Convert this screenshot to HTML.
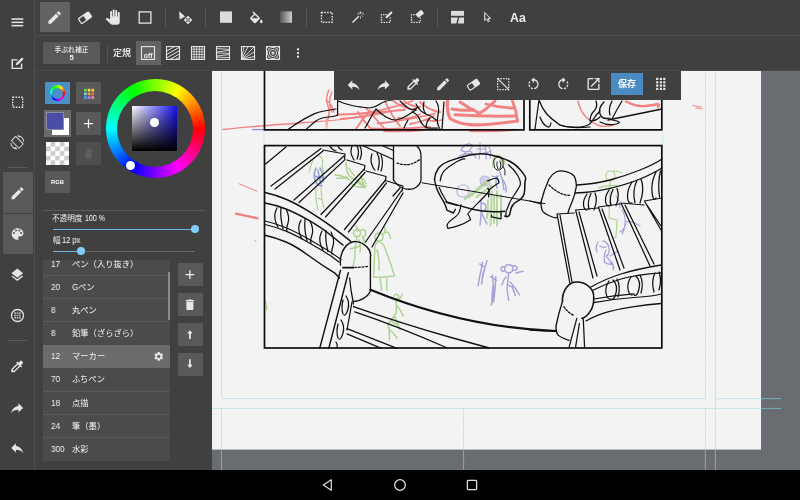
<!DOCTYPE html>
<html lang="ja"><head><meta charset="utf-8"><title>MediBang Paint</title>
<style>
*{margin:0;padding:0;box-sizing:border-box}
html,body{width:800px;height:500px;overflow:hidden;background:#404040;font-family:"Liberation Sans","Noto Sans CJK JP",sans-serif;color:#fff}
.abs{position:absolute}
#side{left:0;top:0;width:34px;height:470px;background:#404040}
#sideline{left:34px;top:0;width:1px;height:470px;background:#4e4e4e}
#top1{left:35px;top:0;width:765px;height:35px;background:#404040}
#top1line{left:35px;top:35px;width:765px;height:1px;background:#4e4e4e}
#top2{left:35px;top:36px;width:765px;height:34px;background:#404040}
#top2line{left:35px;top:70px;width:765px;height:1px;background:#4a4a4a}
#panel{left:35px;top:71px;width:177px;height:399px;background:#404040}
#canvas{left:212px;top:71px;width:588px;height:399px;background:#696d72;overflow:hidden}
#nav{left:0;top:470px;width:800px;height:30px;background:#000}
.sel{background:#636363}
.btn{background:#595959}
svg{position:absolute;left:0;top:0;overflow:visible}
.ln{left:0;width:127px;height:1px;background:#5a5a5a}
.t{position:absolute;white-space:nowrap;line-height:1;will-change:transform}
.n{font-size:9.400px;transform:scaleX(.87);transform-origin:0 50%}
</style></head><body>
<div id="canvas" class="abs">
<svg width="588" height="399" viewBox="212 71 588 399">
<defs>
<pattern id="chk" x="212" y="71" width="3.200" height="3.200" patternUnits="userSpaceOnUse"><rect width="3.200" height="3.200" fill="#fdfdfd"/><rect width="1.600" height="1.600" fill="#e9e9e9"/><rect x="1.600" y="1.600" width="1.600" height="1.600" fill="#e9e9e9"/></pattern>
</defs>
<rect x="212" y="71" width="549" height="378.600" fill="url(#chk)"/>
<!-- guides -->
<g stroke="#6fd0d8" stroke-width="0.900" fill="none" opacity="0.420">
<path d="M221.500 71V398.600M221.500 408.400V449.600M463.600 408.400V449.600M705.400 71V398.600M705.400 408.400V449.600M715.400 71V449.600"/>
<path d="M221.500 398.600H705.400M715.400 398.600H761M212 408.400H761"/>
<path d="M264 71V348M662.700 71V348" opacity="0.700"/>
</g>
<g stroke="#74cfd6" stroke-width="0.900" fill="none" opacity="0.800">
<path d="M221.500 449.600V470M463.600 449.600V470M705.400 449.600V470M715.400 449.600V470M761 398.600H781M761 408.400H781"/>
</g>
<!--ARTB--><!-- red rough sketch -->
<g fill="none" stroke="#f26d6d" stroke-linecap="round" stroke-linejoin="round" opacity="0.850">
<path d="M223 129.500Q250 126.500 300 123T356 117" stroke-width="1.300"/>
<path d="M239.200 183.800L256.800 191.200" stroke-width="1"/>
<path d="M236 213.600L257.400 218.400" stroke-width="2.400"/>
<path d="M254.500 240l1.500 1.500" stroke-width="1"/>
<path d="M329 90q-4 8-1 16t-2 18M332 92q-5 10 0 20M326 100q6 4 8 12" stroke-width="1.400"/>
<path d="M337.500 114.750q30-1 67.500-5M341 119q24-2 50-8" stroke-width="2"/>
<path d="M362.500 113.500q26-4 50-12.500M377.500 123.500q30-3 57.500-10M366 108l18 20M358 112q6 10 14 18M370 111q-8 8-14 18" stroke-width="1.800"/>
<path d="M385 101q6 14 15 25M392 100q10 8 24 10M404 101q8 6 16 6M398 118q12 2 22-4M410 124q12-2 24-8M420 102q8 8 20 10M426 120q8 2 16 0" stroke-width="1.800"/>
<path d="M372.500 128.500q28 1 57.500-1.500M384 131q20 1 40-1" stroke-width="1.800"/>
<path d="M447.500 101q-1 10 2.500 17.500q8 5 20 6.200t47.500-3.700" stroke-width="3.200"/>
<path d="M455 114.750q30 2 60 1.250M452 109q10 2 22 1" stroke-width="3"/>
<path d="M460 102q10 7 20 11.500M495 101q-8 8-17.500 13.750M512.500 101q4 10 5 20M486 104q14 4 28 4" stroke-width="2.800"/>
<path d="M470 131q22 1 45-1.200" stroke-width="2"/>
<path d="M578 101q2 10 8 16t14 9q8 1 14-1" stroke-width="1.400"/>
<path d="M626 101.500q8 4 14 4.500t18-2q2 1 0 3" stroke-width="2.400"/>
<path d="M693 105.500l8 1.500M696 108l6 .8" stroke-width="1"/>
</g>
<path d="M252 129.600h12.500" stroke="#8c8ce0" stroke-width="1.300" fill="none"/>
<path d="M326 118q2 6 0 12" stroke="#f6b08a" stroke-width="2" fill="none" opacity="0.800"/>
<!-- purple figures -->
<g fill="none" stroke="#a29dd8" stroke-width="1.100" stroke-linecap="round" stroke-linejoin="round" opacity="0.950">
<path d="M461 150q4-7 9-6t-1 7q-5 2-8-1M459 156q9-4 17-1M470 151q4 3 6 7M466 152l-4 6M480 143q1 8-1 16M477 149h8M485 146q2 7 1 13M489 147q3 5 1 11M483 153q5 0 8-2" stroke-width="1.200"/>
<path d="M480 181q0-5 5-5t5 5t-5 5t-5-5z" fill="#a9a4da" fill-opacity="0.450" stroke-opacity="0.600"/><path d="M457 191q0-6 6-6t6 6t-6 6t-6-6z" opacity="0.600" stroke-width="1.600"/><path d="M500 172q3 8 4 18M497 176q-2 6 0 12M503 180q4 6 3 12M492 176q4 2 6 0" stroke="#8f9bd4" stroke-width="1.300"/>
<path d="M481 201q1 12-1 24M481 203q5 0 5 4t-5 5l6 12" stroke-width="1.500"/>
<path d="M482.600 262.200q-1 6-2.200 11t-2.400 12.600M487 260.400q-1.500 6-3 11t-2.400 12.600M479.800 264q2 2 4.300 2.600M484 270q-2 6-2 12" stroke-width="1.500"/>
<path d="M492.400 275q.8 6 1.100 12.600t-2.200 17.400M495.700 276.700q0 6-.7 12.700t-1.500 12.700M490.600 276.700q3 2 5.800 3.700M493 286q-1 8-1 14" stroke-width="1.500"/>
<path d="M504.700 268.800q0-4 4-4t4 4t-4 4t-4-4zM504 267q-3-1-3 2t3 2M513 266q3-1 4 1.500t-3 3M508.700 273q-1 8-1.700 16.400l1.700 11M510 282q4 4 9.600 13M512.400 287.600l3 8M516 273q4-1 7-1.700M506 277q-3 3-4 8M507 284q3 3 6 3" stroke-width="1.400"/>
<path d="M598 242q-3 5-1 10M603 241q5 1 6 7t-3 8q4 4 8 12M606 250q-3 6-1 12M610 256l8-5M604 262q4 3 8 2M612 262q2 4 1 8M600 246q3 2 6 1" stroke-width="1.300"/>
<path d="M622 210q4 6 3 14t-3 10M625 222q6-2 15 4M620 232q4-2 6-8M616 196q4 6 4 12"/>
<path d="M316 168q-3 6-1 12t7 6M320 168q4 6 3 14M315 176q5 3 9 1M318 170q1 8 3 14" stroke="#8f9bd4" stroke-width="1.600"/>
</g>
<!-- green figures -->
<g fill="none" stroke="#a5cf86" stroke-width="1.100" stroke-linecap="round" stroke-linejoin="round" opacity="0.900">
<path d="M315 158q3-4 6-1t1 9M314 158q-3 6-5 14M322 166q2 4 1 8M316 188q-1 10 2 22M321 188q0 10 3 20M318 198l4 2"/>
<path d="M335 175q5 0 9 1.750t6 3.750M337 178q6 1 10-1M346 162.500q0 6 1.750 10.500t6.750 6t10.500 9M349 168q3 6 6 8M360.500 176q2 5 3 9M357 182q4 4 9 4M352 184q5 4 12 3M362 178q3 2 4 6" stroke-width="1.500"/>
<path d="M353.500 233q0-3.500 3.500-3.500t3.500 3.500t-3.500 3.500t-3.500-3.500zM360 231q3-3 5 0t-1 6M357 237q-2 8-2 15t-2 15M350.400 248.800q5-1 9.100-2.800M359 240q2 6 1 12M362 236q3 4 2 9M356 226q2 3 1 5" stroke-width="1.400"/>
<path d="M375 237q0-4 4-4t4 4t-4 4t-4-4zM382 235q3-3 5-3t3.700 6.400M379 241q-3 2-4 5.200q-1 16-1.200 31.200q10 0 20.800-1.400q-5-16-10.400-29.800q-2-3-5.200-5.200M380.300 278.700l1.300 11.700M386.800 278.700v11.700M377 250q3 10 2 20M384 226q2 4 0 7" stroke-width="1.400"/>
<path d="M394 296q2-3 4-1t-1 4M402.400 294.300q-2 4-4 6M396 299q1 8 0 14.800q-4 5-8 10.400q2 8 1.400 15.600M397 306q4 4 6 10M394 316q4 6 6 14M390 330q4 3 7 8M392 322l6 3" stroke-width="1.500"/>
<path d="M493 159q3-5 7-3t5 8M495 158q-3 4-2 9M499 156.500q3 3 3 8" stroke-width="1.300"/>
<path d="M488 180.500q-11 9-23 18.500M491.500 185.600q-8 6-15 11.500M485 184q-8 7-16 13" stroke-width="2.400" opacity="0.850"/>
<path d="M491.500 191q0 17-1 34.500M497 191v34.500M494 196q.5 14 0 27M501 195v20M488 200q0 10-1 18" stroke-width="2" opacity="0.850"/>
<path d="M606 176q0-5 4.500-5t4.500 5t-4.500 5t-4.500-5zM610 181q0 18-1 37l8 2l-1 17l-4 1M598 188q10-4 22-2M613 171q6 0 9 2"/>
<path d="M264.500 300q3 4 2 10" />
</g>
<!-- black line art -->
<g fill="none" stroke="#111" stroke-width="1.250" stroke-linecap="round" stroke-linejoin="round">
<!-- panel 1 content -->
<path d="M288 129.600q8-6 16-10.500t12-6t20-4.100M306 129.600q5-5 10-8.600t12-4t9.600-2M337.600 115V100.500"/>
<path d="M338 101q7 3 14 4.500t18 2.500q6-1 10-4t12-4"/>
<path d="M376 109q-4 6-6 10t-5 9M376 109q5 5 10 8t10 3q6-1 12-5t8-5"/>
<path d="M404 128q2-5 4-8M400 101q6 6 10 8t8-2M416 104q4 8 10 10t10 6M424 102q-2 8 2 12M430 118q-4 4-4 10M436 101q4 6 2 14t2 14M444 102l-2 27"/>
<path d="M412 112q6 2 8 8t8 8h10"/>
<path d="M539 100q3 8 7 13t14 12q10 3 20 2t12-6q4-6 8-10M539 100q-2 14-4 29M540 117q2 6 6 9t5-3"/>
<path d="M596 101q2 6-2 10t-4 10q6 0 10-4M604 102q-6 6-4 12t10 4M612 101q-4 8-2 14M600 122q8 4 16 2t-4-4M622 101q-6 10-10 18"/>
<path d="M608 120L662 109" stroke-width="1.300"/>
<path d="M560 125q10 4 30 2" />
<!-- panel 2: upper-left stairs -->
<path d="M265.600 164L286 147"/>
<path d="M271 186L321 148.400M275 189L323 151"/>
<path d="M323 150L345 154L344.500 159"/>
<path d="M294 200L344 156M299 202.500L345 159.600"/>
<path d="M347 160L365 165.500L364.300 170"/>
<path d="M321 214.500L364 169.500M325.500 217L365 172.500"/>
<path d="M366 171L386 176.500L385.500 181"/>
<path d="M344.500 229.500L385.600 180M348.500 232L386.400 183"/>
<path d="M387 181L403 186L402 191"/>
<path d="M365.500 242L402 190M372 247L403 193"/>
<!-- far baluster rail -->
<path d="M363.500 146L393.500 159.500M383 146L393.500 150.500"/>
<path d="M330 146q2 4 6 5M338 146q1 3 4 4"/>
<path d="M352 146q-2 6 0 10t2 4M357 146q3 6 0 13M360 146q3 7 0 13.500"/>
<path d="M372 154q-2 6 0 11t3 5M377 153q4 7 1 17M381 155q3 7 0 16"/>
<path d="M393.500 160V180.500"/>
<!-- far post -->
<path d="M393.500 146V180q4 6 9 8t10.500.800q6-2 8-8.300V155q-.5-6-4-8.500"/>
<path d="M397 163.200q5 1.500 10 1.500t12.700-5" stroke-dasharray="2 1.600"/>
<path d="M400 188L393 196"/>
<!-- long line behind tub -->
<path d="M422 182.800L545 203.600" stroke-width="1"/>
<!-- tub -->
<path d="M434.500 179q.5-6 3.800-10.500t11.400-7.600t19-5.700t19-.9t17 4.800t15.300 10.400t5.600 9.500t-.9 10.500t-6.700 11.400t-7.600 10.400t-5.700 4.700" stroke-width="1.500"/>
<path d="M440.200 180.800q.5-5 2.800-8.500t10.500-8.600t11.400-4.700M508.500 164.700q6 5 9.500 11.300t2 9.600t-5.800 9.400t-5.700 10.500l-1.900 4.700"/>
<path d="M434.500 179q.5 4 1.900 8.500t5.600 11.400t4.800 11.300l6.700 2.800l1.900-3.700" stroke-width="1.400"/>
<path d="M439.200 187.500q2 5 4.800 9.500t2.800 5.700l10.500 2.800"/>
<path d="M445.900 201.700q13 4 26.600 7.600t32.200 1.900" stroke-width="1.400"/>
<path d="M501 211.200v7.600l-9.500-1.900v-1.900M506 211v5"/>
<path d="M461 204.600q-.5 4-1.800 7.500t-7.600 7.600t-3.800 8.600q6-1 11.400-2.900t11.400-5.700q-1-3-2.900-5.700q4-5 8.600-9.400t9.500-9.600t1.900-6.600" stroke-width="1.200"/>
<path d="M487.700 180.800q5-2 9.300-2.800q2 2 2 4.700q-5 3-9.500 6.700q-1 4-.9 7.600"/>
<!-- sitting figure head -->
<path d="M494 160q2-4 5-3.500t4 4.500t-1 7t-5 2t-3-5zM497 162q-1 4 1 7M500 161q2 4 0 8M503 166q3 4 2 9" stroke-width="0.900"/>
<!-- right post top -->
<path d="M530 201L541 204"/>
<path d="M541 202q3-12 8-23q3-5 7-7t10-.400t8 4.400t2.400 10q-1 8-4.400 16t-4 11" stroke-width="1.300"/>
<path d="M541 202q0 5 1 8t8 6t7 1"/>
<path d="M549 185q5 5 11 8t10 2" stroke-dasharray="2 1.600"/>
<!-- upper right railing -->
<path d="M577 185q18-1 33-5t30-10t22-11" stroke-width="1.300"/>
<path d="M575 193q18-.5 35-4.600t30-9.400t22-11" stroke-width="1.300"/>
<path d="M587 194q-4 6-3.500 11t3.500 5M591 193.500q-4 8-2 16M595 193q3 7-1 17"/>
<path d="M609 190q-4 6-3.500 11t3.500 5M613 189.500q-4 8-2 16M617 188.500q3 7-1 17"/>
<path d="M632 182q-5 8-4.500 15t4.500 6M637 180.500q-5 10-2 22M641 179q4 10-1 24"/>
<path d="M656 172q-5 10-4 20t4 6M660.500 171q-3 12-1 26"/>
<!-- upper right steps -->
<path d="M557 214L574 213M557 214L570 284M560 215L572 282"/>
<path d="M575.600 210L598 208M575.600 210L593 278M579 212L597 276"/>
<path d="M598.400 207L620 204M598.400 207L620 270M602 209L624 268"/>
<path d="M621 203L644 205M621 203L650 266M625 205L654 264"/>
<path d="M644.400 201L662 198M644.400 201L661 230M647 205L661 226"/>
<!-- lower right railing -->
<path d="M591 287q14-8 30-13t40.300-9" stroke-width="1.300"/>
<path d="M592.400 290.500q14-7 28.600-11.500t40.300-6.200" stroke-width="1.300"/>
<path d="M593.700 302.700q20-4 40.300-5.200t27.300-3.500M594 299q20-4 40-5.200"/>
<path d="M586 321q10-6 22-9.200t26-5.200t27.300-3.100" stroke-width="1.300"/>
<path d="M609 281q-4 6-3 12t4 6M613 280q5 5 3 13t-5 6M617 279q4 8 1 18"/>
<path d="M631 277q-4 6-3 12t4 6M636 276q5 5 3 13t-5 6M640 275q4 8 1 18"/>
<path d="M655 273q-4 8-1 19M659 272q3 8 0 18"/>
<!-- lower right post -->
<path d="M562.500 301.400q-.5-8 4-14t11.500-5.400t11.500 5t4.200 10.400q.5 8-3.500 14t-8.200 7" stroke-width="1.600"/>
<path d="M562.500 301.400q-4 12-6.500 24.600q-.5 5 1.300 8t11.700 6.400" stroke-width="1.400"/>
<path d="M563.800 306.600q4 6 10.400 9.100" stroke-dasharray="2 1.600"/>
<path d="M576.800 318.300L569 347.700M583.300 319L584.600 347.700M579.400 323.500L575.500 347.700"/>
<path d="M530 330L556 331.300" stroke-width="1.600"/>
<!-- big stair lines lower middle -->
<path d="M370.400 289.700C415 308 480 328 556 331" stroke-width="2.100"/>
<path d="M353.500 306.600Q400 323 452 337.800L488.400 347.700" stroke-width="1.500"/>
<path d="M354.800 311.800Q400 327 446.800 347.700"/>
<path d="M347 328.700L396.400 348.200M347 333.900L380.800 348.200"/>
<!-- left railing arcs -->
<path d="M265 192.500q11 2.500 21 6.700t22.500 12t22.500 15t19.500 15" stroke-width="1.500"/>
<path d="M265 203q11 2 21 6t22.500 11.200t19.500 12.800t15 12" stroke-width="1.500"/>
<path d="M265 221q11 2.500 21 6.700t22.500 11.300t22.500 13.500l10 7" stroke-width="1.100"/>
<path d="M265 224.500q11 2.500 21 6.700t22.500 11.300t22.500 13.500l8 6"/>
<path d="M265 235.250q11 2.500 21 6.750t22.500 13.500t26 17.300l5 5.200" stroke-width="1.500"/>
<!-- left balusters -->
<path d="M277 208q-3 6-2 11t3 8M281 207.500q-1 10 2 21M286 209q4 8 2 14t-1 8"/>
<path d="M301 220q-3 6-2 11t3 8M305 219.500q-1 10 2 21M310 221q4 8 2 14t-1 8"/>
<path d="M322 231q-3 6-2 11t3 8M326 230.500q-1 10 2 21M331 232q4 8 2 14t-1 8"/>
<!-- left post -->
<path d="M340.500 265q-1-10 4-17t11.500-6.400t11 5.400t3.400 10.200V291q-2 5-7.800 7.800t-9.100 2.600" stroke-width="1.400"/>
<path d="M343 267.600H353.500" stroke-width="1.800"/>
<path d="M355 267.400q6 0 12.800-1.100" stroke-dasharray="1.800 1.800"/>
<path d="M340.500 270.200L319.700 348.200M348.300 272.800L328.800 348.200" stroke-width="1.400"/>
<path d="M349.600 278q1 12 3.900 26"/>
<path d="M346 296q4 6 2 13t-4 6M343 300q-2 8 0 14M341 320q4 6 2 13t-4 6M338 324q-2 8 0 14M336 342q2 3 1 6"/>
<path d="M352 302L347 330"/>
</g>
<!-- panel borders -->
<g fill="none" stroke="#0c0c0c" stroke-width="1.700">
<path d="M264.500 70V129.800H524V70"/>
<path d="M529.800 70V129.800H661.800V70"/>
<rect x="264.500" y="145.600" width="397.300" height="202.400"/>
</g>
<!--ARTE-->
</svg>

</div>
<div id="side" class="abs"></div><div id="sideline" class="abs"></div>
<div id="top1" class="abs"></div><div id="top1line" class="abs"></div>
<div id="top2" class="abs"></div><div id="top2line" class="abs"></div>
<div id="panel" class="abs"></div>
<div id="nav" class="abs"></div>
<div class="abs sel" style="left:40px;top:2px;width:30px;height:30px"></div>
<div class="abs btn" style="left:3px;top:172px;width:30px;height:41px"></div>
<div class="abs btn" style="left:3px;top:214px;width:30px;height:40px"></div>
<div class="abs btn" style="left:43px;top:42px;width:57px;height:22px"></div>
<div class="t" style="left:43px;top:47.200px;width:57px;text-align:center;font-size:6.800px;font-weight:500;color:#f2f2f2">手ぶれ補正</div>
<div class="t" style="left:43px;top:54px;width:57px;text-align:center;font-size:7.600px;font-weight:bold;color:#f2f2f2">5</div>
<div class="t" style="left:113px;top:48.500px;font-size:9px;font-weight:500;color:#f4f4f4">定規</div>
<div class="abs sel" style="left:136px;top:41px;width:25px;height:24px"></div>
<!-- color buttons -->
<div class="abs" style="left:45px;top:82px;width:25px;height:22px;background:#4a90c4"></div>
<div class="abs" style="left:49.600px;top:85.300px;width:15.800px;height:15.800px;border-radius:50%;background:conic-gradient(from 90deg,#f00,#f0f,#00f,#0ff,#0f0,#ff0,#f00)"></div>
<div class="abs" style="left:51.800px;top:87.500px;width:11.400px;height:11.400px;border-radius:50%;background:#4a90c4"></div>
<div class="abs btn" style="left:76px;top:82px;width:25px;height:22px"></div>
<div class="abs" style="left:44px;top:110px;width:27px;height:27px;background:#6a6a6a"></div>
<div class="abs" style="left:52px;top:118px;width:17px;height:17px;background:#fff"></div>
<div class="abs" style="left:46px;top:112px;width:18px;height:17.500px;background:#4a4ca8;border:1px solid #8c8ca0"></div>
<div class="abs btn" style="left:76px;top:112px;width:25px;height:23px"></div>
<div class="abs" style="left:46px;top:142px;width:23px;height:22.500px;background-color:#fff;background-image:linear-gradient(45deg,#c8c8c8 25%,transparent 25%,transparent 75%,#c8c8c8 75%),linear-gradient(45deg,#c8c8c8 25%,transparent 25%,transparent 75%,#c8c8c8 75%);background-size:9.200px 9.200px;background-position:0 0,4.600px 4.600px"></div>
<div class="abs" style="left:76px;top:142px;width:25px;height:23px;background:#4e4e4e"></div>
<div class="abs btn" style="left:45px;top:171px;width:25px;height:22px"></div>
<div class="t" style="left:45px;top:179.800px;width:25px;text-align:center;font-size:5.800px;font-weight:bold;color:#fff">RGB</div>
<!-- color wheel -->
<div class="abs" style="left:105.500px;top:78.800px;width:99.400px;height:99.400px;border-radius:50%;background:conic-gradient(from 90deg,#f00,#f0f,#00f,#0ff,#0f0,#ff0,#f00)"></div>
<div class="abs" style="left:117.200px;top:90.500px;width:76px;height:76px;border-radius:50%;background:#404040"></div>
<div class="abs" style="left:132px;top:106px;width:45.300px;height:45px;background:linear-gradient(to top,#000,rgba(0,0,0,0)),linear-gradient(to right,#fff,#1410f0)"></div>
<div class="abs" style="left:149.900px;top:117.900px;width:9px;height:9px;border-radius:50%;background:#fff"></div>
<div class="abs" style="left:126.200px;top:160.500px;width:9px;height:9px;border-radius:50%;background:#fff"></div>
<!-- sliders -->
<div class="abs" style="left:43px;top:210px;width:162px;height:1px;background:#5a5a5a"></div>
<div class="t" style="left:52.400px;top:215px;font-size:7.600px;color:#f2f2f2">不透明度</div>
<div class="t n" style="left:85px;top:214.300px;font-size:8.600px;transform:scaleX(.82)">100 %</div>
<div class="abs" style="left:53px;top:228.700px;width:142px;height:1.200px;background:#6ab7ea"></div>
<div class="abs" style="left:190.800px;top:225.400px;width:7.800px;height:7.800px;border-radius:50%;background:#82cdf7"></div>
<div class="t" style="left:53px;top:237px;font-size:7.600px;color:#f2f2f2">幅</div>
<div class="t n" style="left:62px;top:236.300px;font-size:8.600px">12 px</div>
<div class="abs" style="left:53px;top:250.700px;width:142px;height:1.200px;background:#686868"></div>
<div class="abs" style="left:53px;top:250.700px;width:28px;height:1.200px;background:#6ab7ea"></div>
<div class="abs" style="left:77px;top:247.400px;width:7.800px;height:7.800px;border-radius:50%;background:#82cdf7"></div>
<!-- brush list -->
<div class="abs" id="blist" style="left:43px;top:259.500px;width:127px;height:201.500px;background:#4b4b4b;overflow:hidden;font-size:8.300px;color:#f4f4f4">
<div class="abs" style="left:0;top:85px;width:127px;height:23.500px;background:#6b6b6b"></div>
<div class="abs ln" style="top:15.500px"></div><div class="abs ln" style="top:38.500px"></div><div class="abs ln" style="top:61.500px"></div>
<div class="abs ln" style="top:131px"></div><div class="abs ln" style="top:154px"></div><div class="abs ln" style="top:177.500px"></div>
<div class="t n" style="left:7.500px;top:-0.1px">17</div><div class="t" style="left:28.500px;top:0.800px">ペン（入り抜き）</div>
<div class="t n" style="left:7.500px;top:22.3px">20</div><div class="t n" style="left:28.500px;top:22.300px">G</div><div class="t" style="left:34.500px;top:23.200px">ペン</div>
<div class="t n" style="left:7.500px;top:45.4px">8</div><div class="t" style="left:28.500px;top:46.300px">丸ペン</div>
<div class="t n" style="left:7.500px;top:68.6px">8</div><div class="t" style="left:28.500px;top:69.500px">鉛筆（ざらざら）</div>
<div class="t n" style="left:7.500px;top:91.7px">12</div><div class="t" style="left:28.500px;top:92.600px">マーカー</div>
<div class="t n" style="left:7.500px;top:114.7px">70</div><div class="t" style="left:28.500px;top:115.600px">ふちペン</div>
<div class="t n" style="left:7.500px;top:138.1px">18</div><div class="t" style="left:28.500px;top:139px">点描</div>
<div class="t n" style="left:7.500px;top:161.1px">24</div><div class="t" style="left:28.500px;top:162px">筆（墨）</div>
<div class="t n" style="left:7.500px;top:184.1px">300</div><div class="t" style="left:28.500px;top:185px">水彩</div>
<div class="abs" style="left:124.600px;top:12px;width:2.200px;height:48px;background:#8a8a8a"></div>
</div>
<div class="abs btn" style="left:178px;top:263px;width:24.500px;height:22.500px"></div>
<div class="abs btn" style="left:178px;top:293px;width:24.500px;height:22.500px"></div>
<div class="abs btn" style="left:178px;top:323px;width:24.500px;height:22.500px"></div>
<div class="abs btn" style="left:178px;top:353px;width:24.500px;height:22.500px"></div>
<!-- floating toolbar -->
<div class="abs" style="left:334px;top:71px;width:347px;height:28.500px;background:#404040"></div>
<div class="abs" style="left:611px;top:73px;width:32px;height:22px;background:#4a8cc2"></div>
<div class="t" style="left:611px;top:79.500px;width:32px;text-align:center;font-size:9px;font-weight:bold;color:#fff">保存</div>

<svg width="800" height="500" viewBox="0 0 800 500">
<defs>
<path id="i-pencil" d="M3 17.25V21h3.750L17.810 9.940l-3.750-3.750L3 17.250zM20.710 7.040c.390-.390.390-1.020 0-1.410l-2.340-2.340c-.390-.390-1.020-.390-1.410 0l-1.830 1.830 3.750 3.750 1.830-1.830z"/>
<path id="i-reply" d="M10 9V5l-7 7 7 7v-4.100c5 0 8.500 1.600 11 5.100-1-5-4-10-11-11z"/>
<path id="i-dropper" d="M20.710 5.630l-2.340-2.340c-.390-.390-1.020-.390-1.410 0l-3.120 3.120-1.930-1.910-1.410 1.410 1.420 1.420L3 16.250V21h4.750l8.920-8.920 1.420 1.420 1.410-1.410-1.920-1.920 3.120-3.120c.400-.400.400-1.030.010-1.420zM6.920 19L5 17.080l8.060-8.060 1.920 1.920L6.920 19z"/>
<path id="i-layers" d="M11.990 18.540l-7.370-5.730L3 14.070l9 7 9-7-1.630-1.270-7.380 5.740zM12 16l7.360-5.730L21 9l-9-7-9 7 1.630 1.270L12 16z"/>
<path id="i-palette" d="M12 3c-4.970 0-9 4.030-9 9s4.030 9 9 9c.830 0 1.500-.670 1.500-1.500 0-.390-.150-.740-.390-1.010-.230-.260-.380-.610-.380-.990 0-.830.670-1.500 1.500-1.500H16c2.760 0 5-2.240 5-5 0-4.420-4.030-8-9-8zm-5.500 9c-.830 0-1.500-.670-1.500-1.500S5.670 9 6.500 9 8 9.670 8 10.500 7.330 12 6.500 12zm3-4C8.670 8 8 7.330 8 6.500S8.670 5 9.500 5s1.500.67 1.500 1.500S10.330 8 9.500 8zm5 0c-.830 0-1.500-.670-1.500-1.500S13.670 5 14.500 5s1.500.67 1.500 1.500S15.330 8 14.500 8zm3 4c-.830 0-1.500-.670-1.500-1.500S16.670 9 17.500 9s1.500.67 1.500 1.500-.670 1.500-1.500 1.500z"/>
<path id="i-trash" d="M6 19c0 1.100.9 2 2 2h8c1.100 0 2-.9 2-2V7H6v12zM19 4h-3.500l-1-1h-5l-1 1H5v2h14V4z"/>
<path id="i-gear" d="M19.140 12.940c.040-.300.060-.610.060-.940 0-.320-.020-.640-.070-.940l2.030-1.580c.180-.140.230-.410.120-.610l-1.920-3.320c-.120-.220-.370-.290-.590-.220l-2.390.96c-.500-.380-1.030-.700-1.620-.940l-.360-2.540c-.040-.240-.240-.410-.480-.410h-3.840c-.240 0-.430.170-.470.410l-.360 2.540c-.590.240-1.130.57-1.620.94l-2.390-.96c-.220-.080-.470 0-.590.220L2.740 8.870c-.120.210-.080.470.12.610l2.030 1.580c-.050.300-.090.630-.090.940s.020.640.070.940l-2.030 1.580c-.180.140-.230.410-.120.610l1.920 3.320c.120.220.37.290.59.220l2.390-.96c.500.380 1.030.70 1.620.94l.360 2.540c.050.240.24.410.48.410h3.840c.24 0 .44-.17.470-.41l.360-2.540c.590-.240 1.130-.56 1.620-.94l2.390.96c.22.080.47 0 .59-.22l1.920-3.320c.12-.22.070-.47-.12-.61l-2.010-1.580zM12 15.600c-1.980 0-3.600-1.620-3.600-3.600s1.620-3.600 3.600-3.600 3.600 1.620 3.600 3.600-1.620 3.600-3.600 3.600z"/>
<path id="i-hand" d="M23 5.500V20c0 2.200-1.800 4-4 4h-7.300c-1.080 0-2.100-.43-2.850-1.190L1 14.830s1.260-1.230 1.300-1.250c.22-.19.490-.29.790-.29.220 0 .42.060.6.160.04.010 4.310 2.460 4.310 2.460V4c0-.83.67-1.500 1.500-1.500S11 3.170 11 4v7h1V1.500c0-.83.67-1.500 1.500-1.500S15 .67 15 1.500V11h1V2.500c0-.83.67-1.500 1.500-1.500s1.500.67 1.500 1.500V11h1V5.500c0-.83.67-1.500 1.500-1.500s1.500.67 1.500 1.500z"/>
<path id="i-open" d="M19 19H5V5h7V3H5c-1.110 0-2 .9-2 2v14c0 1.100.89 2 2 2h14c1.100 0 2-.9 2-2v-7h-2v7zM14 3v2h3.590l-9.830 9.830 1.410 1.410L19 6.410V10h2V3h-7z"/>
<path id="i-rotl" d="M7.110 8.530L5.700 7.110C4.800 8.270 4.240 9.610 4.070 11h2.020c.14-.87.490-1.720 1.020-2.470zM6.090 13H4.070c.17 1.390.72 2.730 1.620 3.890l1.410-1.420c-.52-.75-.87-1.590-1.010-2.470zm1.010 5.320c1.160.9 2.510 1.440 3.900 1.610V17.900c-.87-.15-1.710-.49-2.460-1.030L7.100 18.320zM13 4.070V1L8.450 5.550 13 10V6.090c2.840.48 5 2.940 5 5.910s-2.160 5.430-5 5.910v2.020c3.950-.49 7-3.850 7-7.930s-3.050-7.440-7-7.930z"/>
<path id="i-rotr" d="M15.550 5.550L11 1v3.070C7.060 4.560 4 7.920 4 12s3.050 7.440 7 7.930v-2.020c-2.840-.48-5-2.940-5-5.910s2.160-5.430 5-5.910V10l4.550-4.450zM19.930 11c-.17-1.390-.72-2.730-1.620-3.890l-1.420 1.420c.54.75.88 1.600 1.020 2.470h2.020zM13 17.900v2.020c1.390-.17 2.740-.71 3.900-1.610l-1.440-1.440c-.75.540-1.590.89-2.460 1.030zm3.890-2.420l1.420 1.410c.9-1.160 1.450-2.500 1.620-3.890h-2.020c-.14.870-.48 1.720-1.020 2.480z"/>
<path id="i-scrrot" d="M16.480 2.520c3.270 1.550 5.610 4.720 5.970 8.480h1.500C23.440 4.840 18.290 0 12 0l-.66.030 3.810 3.810 1.330-1.320zm-6.250-.77c-.59-.59-1.540-.59-2.120 0L1.750 8.110c-.59.590-.59 1.540 0 2.120l12.020 12.020c.59.590 1.540.59 2.120 0l6.360-6.360c.59-.59.590-1.540 0-2.120L10.230 1.750zm4.600 19.440L2.810 9.170l6.360-6.360 12.020 12.020-6.360 6.360zm-7.310.29C4.250 19.940 1.910 16.760 1.550 13H.05C.56 19.160 5.710 24 12 24l.66-.03-3.810-3.810-1.330 1.320z"/>
<path id="i-bucket" d="M16.560 8.940L7.620 0 6.210 1.410l2.380 2.380-5.150 5.150c-.59.590-.59 1.540 0 2.120l5.500 5.500c.29.290.68.440 1.060.440s.77-.15 1.060-.44l5.500-5.500c.59-.58.590-1.530 0-2.120zM5.210 10L10 5.210 14.790 10H5.210zM19 11.500s-2 2.170-2 3.500c0 1.100.9 2 2 2s2-.9 2-2c0-1.330-2-3.500-2-3.500z"/>
<path id="i-add" d="M19 13h-6v6h-2v-6H5v-2h6V5h2v6h6v2z"/>
<path id="i-up" d="M4 12l1.410 1.410L11 7.830V20h2V7.830l5.580 5.590L20 12l-8-8-8 8z"/>
<path id="i-down" d="M20 12l-1.410-1.410L13 16.170V4h-2v12.170l-5.580-5.590L4 12l8 8 8-8z"/>
<g id="i-eraser"><rect x="-6.800" y="-3.600" width="13.600" height="7.200" rx="1.600" fill="#e8e8e8"/><rect x="-5.600" y="-2.400" width="5.400" height="4.800" rx="0.600" fill="#404040"/></g>
<linearGradient id="gr1" x1="0" x2="1" y1="0" y2="0"><stop offset="0" stop-color="#555"/><stop offset="1" stop-color="#cfcfcf"/></linearGradient>
</defs>
<g fill="#e6e6e6">
<!-- sidebar -->
<rect x="11.500" y="18.300" width="11.800" height="1.500"/><rect x="11.500" y="21.600" width="11.800" height="1.500"/><rect x="11.500" y="24.900" width="11.800" height="1.500"/>
<path d="M17.500 59.900H12.200V68.400H21.600V63.500" fill="none" stroke="#e6e6e6" stroke-width="1.400"/>
<path d="M15.800 65.200l.5-2.100 5.700-5.700 1.600 1.600-5.700 5.700z"/>
<rect x="12.700" y="97.200" width="10" height="10" fill="none" stroke="#e6e6e6" stroke-width="1.400" stroke-dasharray="1.500 1.330"/>
<use href="#i-scrrot" transform="translate(10.300 135.300) scale(0.583)"/>
<rect x="8" y="167" width="19" height="1" fill="#5c5c5c"/>
<use href="#i-pencil" transform="translate(9.600 185.300) scale(0.660)"/>
<use href="#i-palette" transform="translate(9.800 226.200) scale(0.650)"/>
<use href="#i-layers" transform="translate(9.500 267.300) scale(0.650)"/>
<circle cx="17.500" cy="315.500" r="6" fill="none" stroke="#e6e6e6" stroke-width="1.300"/>
<g fill="#b4b4b4"><rect x="14.300" y="312.300" width="1.700" height="1.700"/><rect x="16.650" y="312.300" width="1.700" height="1.700"/><rect x="19" y="312.300" width="1.700" height="1.700"/><rect x="14.300" y="314.650" width="1.700" height="1.700"/><rect x="16.650" y="314.650" width="1.700" height="1.700"/><rect x="19" y="314.650" width="1.700" height="1.700"/><rect x="14.300" y="317" width="1.700" height="1.700"/><rect x="16.650" y="317" width="1.700" height="1.700"/><rect x="19" y="317" width="1.700" height="1.700"/></g>
<rect x="8" y="340" width="19" height="1" fill="#5c5c5c"/>
<use href="#i-dropper" transform="translate(9.300 358.500) scale(0.660)"/>
<use href="#i-reply" transform="translate(25 400) scale(-0.660 0.660)"/>
<use href="#i-reply" transform="translate(9.300 440) scale(0.660)"/>
<!-- top toolbar -->
<use href="#i-pencil" transform="translate(46.300 9.300) scale(0.690)"/>
<use href="#i-eraser" transform="translate(85 17.800) rotate(-35)"/>
<use href="#i-hand" transform="translate(105 9.400) scale(0.640)"/>
<rect x="139.200" y="11.900" width="11.700" height="11.200" fill="none" stroke="#e6e6e6" stroke-width="1.300"/>
<rect x="165" y="8" width="1" height="19" fill="#555"/>
<path d="M179.100 11.200l6 5.300-5.400 2.900z"/>
<path d="M188 15.700l2.600 2.500h-5.200zM188 24.300l2.600-2.500h-5.200zM183.700 20l2.500-2.600v5.200zM192.300 20l-2.500-2.600v5.200z"/>
<circle cx="188" cy="20" r="2.100" fill="#9a9a9a"/>
<rect x="205" y="8" width="1" height="19" fill="#555"/>
<rect x="220" y="11.400" width="12" height="11.400" fill="#dcdcdc"/>
<use href="#i-bucket" transform="translate(248 11.300) scale(0.700)"/>
<rect x="280" y="11.400" width="12" height="11.400" fill="url(#gr1)"/>
<rect x="306" y="8" width="1" height="19" fill="#555"/>
<rect x="321.500" y="12.500" width="10.700" height="9.700" fill="none" stroke="#e6e6e6" stroke-width="1.400" stroke-dasharray="1.500 1.330"/>
<path d="M352 22l6.300-6.300 1 1-6.300 6.300z"/>
<path d="M360.500 11.500v2.500M360.500 16.500v2M357.500 14h2M362 14h2M358.600 12l1 1M362.500 12l-1 1M362.500 16.500l-1-1" stroke="#e6e6e6" stroke-width="0.800" fill="none"/>
<path d="M387 14.600h-5.500v7.700h8.800v-5" fill="none" stroke="#e6e6e6" stroke-width="1.300" stroke-dasharray="1.400 1.150"/>
<path d="M385.500 18.300l.4-1.900 5.200-5.200 1.500 1.500-5.200 5.200z"/>
<path d="M417 14.600h-5.500v7.700h8.800v-5" fill="none" stroke="#e6e6e6" stroke-width="1.300" stroke-dasharray="1.400 1.150"/>
<g transform="translate(419.800 13.800) rotate(-40)"><rect x="-3.700" y="-2.400" width="7.400" height="4.800" rx="1" fill="#e6e6e6"/></g>
<rect x="437" y="8" width="1" height="19" fill="#555"/>
<rect x="451" y="10.900" width="13" height="4.900" fill="#dcdcdc"/>
<path d="M451 17.500h6.800l-1.500 6.100H451zM459.300 17.500H464v6.100h-6.200z" fill="#dcdcdc"/>
<path d="M484.700 12.500v8l2-1.700 1.400 3 1.300-.6-1.400-2.900h2.500z" fill="none" stroke="#e6e6e6" stroke-width="1"/>
<text x="510" y="21.900" font-family="Liberation Sans, sans-serif" font-weight="bold" font-size="12.300" fill="#ededed">Aa</text>
<!-- second toolbar -->
<rect x="107" y="44" width="1" height="19" fill="#555"/>

<g fill="none" stroke="#e6e6e6" stroke-width="1.100">
<rect x="141.500" y="46.600" width="13" height="12.800"/>
<rect x="166.500" y="46.600" width="13" height="12.800"/>
<rect x="191.500" y="46.600" width="13" height="12.800"/>
<rect x="216.500" y="46.600" width="13" height="12.800"/>
<rect x="241.500" y="46.600" width="13" height="12.800"/>
<rect x="266.500" y="46.600" width="13" height="12.800"/>
<path d="M166.500 51.200l8-4.600M166.500 54.600l13-7.400M166.500 58l13-7.400M170 59.400l9.500-5.400M175.500 59.400l4-2.300" stroke-width="1"/>
<path d="M194.100 46.600v12.800M196.700 46.600v12.800M199.300 46.600v12.800M201.900 46.600v12.800M191.500 49.200h13M191.500 51.800h13M191.500 54.400h13M191.500 57h13" stroke-width="0.800"/>
<path d="M216.500 48.600l13 .8M229.500 50.400l-13 1.600M216.500 53l13 .4M229.500 54.600l-13 1.400M216.500 57l13 .6" stroke-width="0.900"/>
<path d="M241.500 59.400l2.500-12.800M241.500 59.400l6.500-12.800M241.500 59.400l13-12.800M241.500 59.400l13-7.400M241.500 59.400l13-3" stroke-width="0.900"/>
<circle cx="273" cy="53" r="5.600" stroke-width="0.900"/><circle cx="273" cy="53" r="3.600" stroke-width="0.900"/>
<path d="M266.500 46.600l2 2M279.500 46.600l-2 2M266.500 59.400l2-2M279.500 59.400l-2-2" stroke-width="0.800"/>
</g>
<circle cx="273" cy="53" r="1.700" fill="#cfcfcf"/>
<text x="143.700" y="58" font-family="Liberation Sans, sans-serif" font-weight="bold" font-size="6.300" fill="#ededed" textLength="8.800" lengthAdjust="spacingAndGlyphs">off</text>
<rect x="297" y="48.300" width="2" height="2"/><rect x="297" y="52" width="2" height="2"/><rect x="297" y="55.700" width="2" height="2"/>
<!-- color buttons -->
<g>
<rect x="84" y="88.800" width="2.700" height="2.700" fill="#62d84c"/><rect x="87.700" y="88.800" width="2.700" height="2.700" fill="#e6e63c"/><rect x="91.400" y="88.800" width="2.700" height="2.700" fill="#f0d23c"/>
<rect x="84" y="92.500" width="2.700" height="2.700" fill="#78d2f0"/><rect x="87.700" y="92.500" width="2.700" height="2.700" fill="#f0a03c"/><rect x="91.400" y="92.500" width="2.700" height="2.700" fill="#f0783c"/>
<rect x="84" y="96.200" width="2.700" height="2.700" fill="#5a96f0"/><rect x="87.700" y="96.200" width="2.700" height="2.700" fill="#b478f0"/><rect x="91.400" y="96.200" width="2.700" height="2.700" fill="#f08c96"/>
</g>
<path d="M88.500 119.200v9M84 123.700h9" stroke="#ededed" stroke-width="1.300" fill="none"/>
<use href="#i-trash" transform="translate(82.200 147.300) scale(0.520)" fill="#5f5f5f"/>
<!-- list buttons -->
<path d="M189.900 270.200v8.800M185.500 274.600h8.800" stroke="#ededed" stroke-width="1.300" fill="none"/>
<use href="#i-trash" transform="translate(182.800 297.700) scale(0.590)"/>
<path d="M189.900 339V332" fill="none" stroke="#ededed" stroke-width="1.700"/><path d="M187.200 333.400l2.700-3.200l2.700 3.200z" fill="#ededed"/>
<path d="M189.900 359.300V366" fill="none" stroke="#ededed" stroke-width="1.700"/><path d="M187.200 364.800l2.700 3.200l2.700-3.200z" fill="#ededed"/>
<use href="#i-gear" transform="translate(153.200 350.900) scale(0.460)"/>
<!-- floating toolbar -->
<use href="#i-reply" transform="translate(345.700 77) scale(0.660)"/>
<use href="#i-reply" transform="translate(391.500 77) scale(-0.660 0.660)"/>
<use href="#i-dropper" transform="translate(405.400 76) scale(0.660)"/>
<use href="#i-pencil" transform="translate(435.200 76.300) scale(0.660)"/>
<use href="#i-eraser" transform="translate(473.400 84.700) rotate(-35) scale(0.950)"/>
<rect x="497.700" y="78.700" width="11" height="11" fill="none" stroke="#e6e6e6" stroke-width="1.300" stroke-dasharray="1.500 1.200"/>
<path d="M497.200 78.200l12 12" stroke="#e6e6e6" stroke-width="1.200" fill="none"/>
<use href="#i-rotl" transform="translate(525.800 76.500) scale(0.640)"/>
<use href="#i-rotr" transform="translate(555.600 76.500) scale(0.640)"/>
<use href="#i-open" transform="translate(585.500 76) scale(0.670)"/>
<g>
<rect x="656.100" y="77.800" width="2.200" height="2.200"/><rect x="659.800" y="77.800" width="2.200" height="2.200"/><rect x="663.200" y="77.800" width="2.200" height="2.200"/>
<rect x="656.100" y="81.200" width="2.200" height="2.200"/><rect x="659.800" y="81.200" width="2.200" height="2.200"/><rect x="663.200" y="81.200" width="2.200" height="2.200"/>
<rect x="656.100" y="84.500" width="2.200" height="2.200"/><rect x="659.800" y="84.500" width="2.200" height="2.200"/><rect x="663.200" y="84.500" width="2.200" height="2.200"/>
<rect x="656.100" y="87.800" width="2.200" height="2.200"/><rect x="659.800" y="87.800" width="2.200" height="2.200"/><rect x="663.200" y="87.800" width="2.200" height="2.200"/>
</g>
<!-- nav -->
<path d="M331.300 479.800v10.400l-8-5.200z" fill="none" stroke="#e0e0e0" stroke-width="1.200" stroke-linejoin="round"/>
<circle cx="400" cy="485" r="5.300" fill="none" stroke="#e0e0e0" stroke-width="1.300"/>
<rect x="467.400" y="480.400" width="9.200" height="9.200" rx="0.800" fill="none" stroke="#e0e0e0" stroke-width="1.300"/>
</g>
</svg>



</body></html>
